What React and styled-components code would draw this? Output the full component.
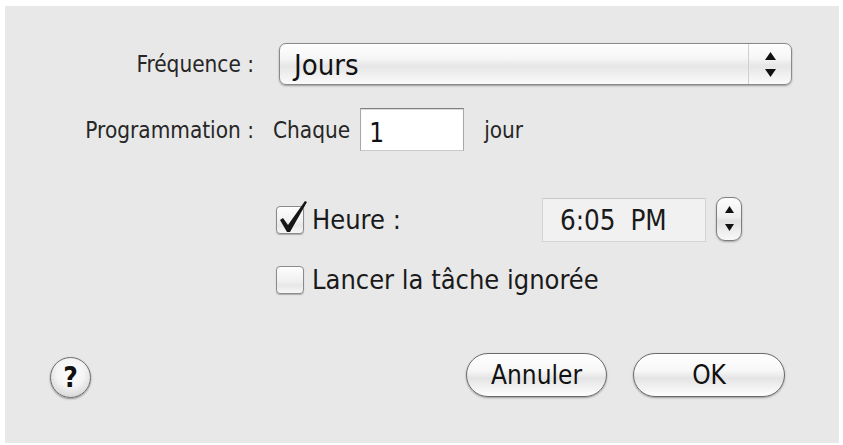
import React from 'react';
import styled, { createGlobalStyle } from 'styled-components';

const Global = createGlobalStyle`
  html, body { margin: 0; padding: 0; background: #ffffff; }
  body {
    font-family: "DejaVu Sans", "Liberation Sans", sans-serif;
    font-stretch: condensed;
    color: #1a1a1a;
  }
`;

const Frame = styled.div`
  width: 843px;
  height: 445px;
  box-sizing: border-box;
  padding: 6px 4px 2px 5px;
  background: #ffffff;
`;

const Panel = styled.div`
  height: 100%;
  box-sizing: border-box;
  background: #e8e8e8;
  display: flex;
  flex-direction: column;
  padding: 37px 0 45px 0;
`;

const FieldRow = styled.div`
  display: grid;
  grid-template-columns: 249px 1fr;
  column-gap: 25px;
  align-items: ${(p) => p.$align || 'center'};
  margin-top: ${(p) => p.$top || 0}px;
`;

const Label = styled.div`
  text-align: right;
  font-size: 22.4px;
  line-height: 24px;
  color: #262626;
  padding-top: ${(p) => p.$pad || 0}px;
  white-space: nowrap;
`;

const Popup = styled.div`
  width: 513px;
  height: 42px;
  box-sizing: border-box;
  border: 1px solid #8a8a8a;
  border-radius: 7px;
  background: linear-gradient(#fefefe 0%, #f6f6f6 35%, #e6e6e6 55%, #efefef 75%, #fbfbfb 100%);
  box-shadow: 0 1px 2px rgba(0, 0, 0, 0.35);
  display: flex;
  align-items: stretch;
`;

const PopupValue = styled.div`
  flex: 1;
  font-size: 29px;
  line-height: 40px;
  padding: 1px 0 0 14px;
  color: #111;
`;

const PopupArrows = styled.div`
  width: 42px;
  border-left: 1px solid #cfcfcf;
  display: flex;
  align-items: center;
  justify-content: center;
`;

const Inline = styled.div`
  display: flex;
  align-items: flex-start;
`;

const Word = styled.span`
  font-size: 22.4px;
  line-height: 24px;
  padding-top: 10px;
  color: #262626;
  margin-left: ${(p) => p.$ml || 0}px;
`;

const NumberInput = styled.div`
  width: 104px;
  height: 43px;
  box-sizing: border-box;
  margin-left: ${(p) => p.$ml || 0}px;
  background: #ffffff;
  border: 1px solid #a8a8a8;
  border-top-color: #7e7e7e;
  border-bottom-color: #c9c9c9;
  box-shadow: inset 0 1px 1px rgba(0, 0, 0, 0.15);
  font-size: 26px;
  line-height: 30px;
  padding: 9px 0 0 8px;
  color: #111;
`;

const OptionRow = styled.div`
  display: flex;
  align-items: center;
  height: ${(p) => p.$h}px;
  margin-top: ${(p) => p.$top}px;
  margin-left: 271px;
`;

const CheckGroup = styled.label`
  display: flex;
  align-items: center;
  width: ${(p) => (p.$w ? `${p.$w}px` : 'auto')};
  gap: 8px;
`;

const Box = styled.span`
  position: relative;
  display: inline-block;
  width: 28px;
  height: 28px;
  box-sizing: border-box;
  border: 1px solid #8a8a8a;
  border-radius: 4px;
  background: linear-gradient(#fdfdfd 0%, #f0f0f0 55%, #e7e7e7 70%, #f7f7f7 100%);
  box-shadow: 0 1px 1px rgba(0, 0, 0, 0.25);
`;

const CheckMark = styled.svg`
  position: absolute;
  left: -1px;
  top: -7px;
  overflow: visible;
`;

const CheckText = styled.span`
  font-size: 27px;
  line-height: 28px;
  color: #1a1a1a;
  white-space: nowrap;
`;

const TimeField = styled.div`
  width: 164px;
  height: 44px;
  box-sizing: border-box;
  background: #f1f1f1;
  border: 1px solid #d4d4d4;
  border-top-color: #cacaca;
  font-size: 27.5px;
  line-height: 42px;
  padding-left: 17px;
  word-spacing: 7px;
  color: #1a1a1a;
`;

const Stepper = styled.div`
  width: 26px;
  height: 44px;
  box-sizing: border-box;
  margin-left: 10px;
  margin-top: -2px;
  border: 1px solid #7e7e7e;
  border-radius: 9px;
  background: linear-gradient(#fdfdfd 0%, #efefef 45%, #e2e2e2 55%, #f8f8f8 100%);
  box-shadow: 0 1px 2px rgba(0, 0, 0, 0.3);
  display: flex;
  align-items: center;
  justify-content: center;
`;

const Footer = styled.div`
  margin-top: auto;
  display: flex;
  justify-content: space-between;
  align-items: flex-start;
  padding: 0 54px 0 45px;
`;

const HelpButton = styled.div`
  width: 41px;
  height: 41px;
  margin-top: 4px;
  box-sizing: border-box;
  border-radius: 50%;
  border: 1.5px solid #6c6c6c;
  background: radial-gradient(circle at 50% 38%, #ffffff 0%, #f4f4f4 45%, #d2d2d2 85%, #bdbdbd 100%);
  box-shadow: 0 1px 2px rgba(0, 0, 0, 0.4);
  display: flex;
  align-items: center;
  justify-content: center;
  font-size: 28px;
  font-weight: bold;
  color: #111;
`;

const ButtonGroup = styled.div`
  display: flex;
  gap: 26px;
`;

const PushButton = styled.div`
  width: ${(p) => p.$w}px;
  height: 44px;
  box-sizing: border-box;
  border-radius: 22px;
  border: 1.5px solid #6a6a6a;
  background: linear-gradient(#ffffff 0%, #f7f7f7 40%, #e4e4e4 58%, #f2f2f2 80%, #ffffff 100%);
  box-shadow: 0 1px 2px rgba(0, 0, 0, 0.35);
  display: flex;
  align-items: center;
  justify-content: center;
  font-size: 26px;
  color: #111;
`;

const UpDown = ({ w, h, gap }) => (
  <svg width={w} height={h * 2 + gap} viewBox={`0 0 ${w} ${h * 2 + gap}`}>
    <polygon points={`${w / 2},0 ${w},${h} 0,${h}`} fill="#111" />
    <polygon points={`0,${h + gap} ${w},${h + gap} ${w / 2},${h * 2 + gap}`} fill="#111" />
  </svg>
);

const Checkbox = ({ checked }) => (
  <Box>
    {checked && (
      <CheckMark width="34" height="36" viewBox="0 0 34 36">
        <polygon points="4,20 7,18 12,25 29,1 31,2 14,32 11,32" fill="#151515" />
      </CheckMark>
    )}
  </Box>
);

export default function App() {
  return (
    <>
      <Global />
      <Frame>
        <Panel>
          <FieldRow>
            <Label>Fréquence :</Label>
            <Popup>
              <PopupValue>Jours</PopupValue>
              <PopupArrows>
                <UpDown w={11} h={8} gap={9} />
              </PopupArrows>
            </Popup>
          </FieldRow>

          <FieldRow $align="start" $top={23}>
            <Label $pad={10}>Programmation :</Label>
            <Inline>
              <Word $ml={-6}>Chaque</Word>
              <NumberInput $ml={10}>1</NumberInput>
              <Word $ml={20}>jour</Word>
            </Inline>
          </FieldRow>

          <OptionRow $h={45} $top={46}>
            <CheckGroup $w={266}>
              <Checkbox checked />
              <CheckText>Heure :</CheckText>
            </CheckGroup>
            <TimeField>6:05 PM</TimeField>
            <Stepper>
              <UpDown w={9} h={7} gap={11} />
            </Stepper>
          </OptionRow>

          <OptionRow $h={28} $top={24}>
            <CheckGroup>
              <Checkbox />
              <CheckText>Lancer la tâche ignorée</CheckText>
            </CheckGroup>
          </OptionRow>

          <Footer>
            <HelpButton>?</HelpButton>
            <ButtonGroup>
              <PushButton $w={141}>Annuler</PushButton>
              <PushButton $w={152}>OK</PushButton>
            </ButtonGroup>
          </Footer>
        </Panel>
      </Frame>
    </>
  );
}
